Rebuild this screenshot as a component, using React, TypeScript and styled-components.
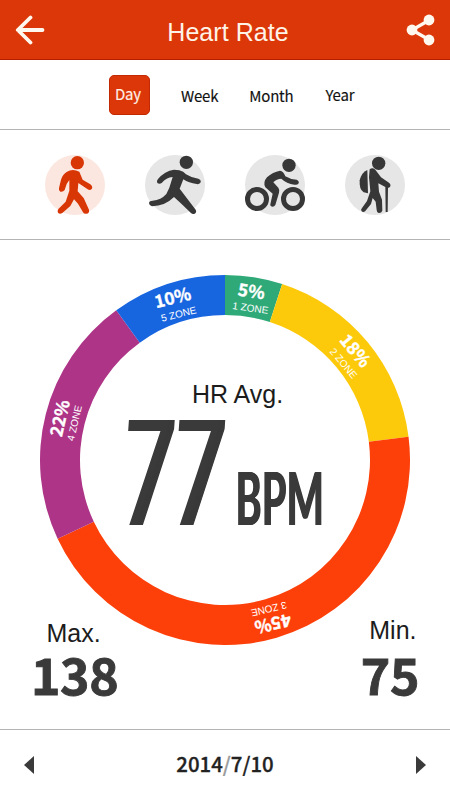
import React from "react";
import styled, { createGlobalStyle } from "styled-components";

const ARIAL = `"Liberation Sans", Arial, sans-serif`;
const SOURCE = `"Noto Sans CJK SC", "Noto Sans", sans-serif`;
const INK = "#3a3a3a";
const RED = "#dc3708";

const GlobalStyle = createGlobalStyle`
  * { box-sizing: border-box; }
  body { margin: 0; background: #fff; }
`;

const Screen = styled.main`
  width: 450px;
  height: 800px;
  display: flex;
  flex-direction: column;
  overflow: hidden;
  background: #fff;
`;

const Header = styled.header`
  height: 60px;
  flex: none;
  display: flex;
  align-items: center;
  justify-content: space-between;
  padding: 0 14px 0 15px;
  background: ${RED};
  border-bottom: 1px solid #b51c00;
`;

const Title = styled.h1`
  margin: 4px 0 0 5px;
  font: 400 25px/30px ${ARIAL};
  letter-spacing: 0.05px;
  color: #fff3e8;
`;

const IconButton = styled.button`
  display: flex;
  padding: 0;
  border: 0;
  background: none;
`;

const Tabs = styled.nav`
  height: 70px;
  flex: none;
  display: flex;
  align-items: flex-start;
  padding: 15px 0 0 109px;
  border-bottom: 1px solid #b4b4b4;
`;

const Tab = styled.button<{ $active?: boolean; $gap?: number; $drop?: number }>`
  height: 40px;
  width: ${(p) => (p.$active ? "41px" : "auto")};
  margin: ${(p) => (p.$active ? 0 : p.$drop ?? 0)}px 0 0 ${(p) => p.$gap ?? 0}px;
  padding: 0 ${(p) => (p.$active ? "3px" : "0")} 2px 0;
  border: ${(p) => (p.$active ? "1px solid #c22a06" : "0")};
  border-radius: 5px;
  background: ${(p) => (p.$active ? RED : "transparent")};
  color: ${(p) => (p.$active ? "#fff0e6" : "#111")};
  font: 400 15px/36px ${SOURCE};
  letter-spacing: -0.2px;
  -webkit-text-stroke: 0.15px currentColor;
  text-align: center;
`;

const Activities = styled.section`
  height: 110px;
  flex: none;
  display: flex;
  justify-content: center;
  padding: 15px 0 0 10px;
  border-bottom: 1px solid #b4b4b4;
`;

const Activity = styled.svg<{ $active?: boolean }>`
  width: 100px;
  height: 80px;
  color: ${(p) => (p.$active ? "#d93606" : "#373737")};
  .disc { fill: ${(p) => (p.$active ? "#fbe7e0" : "#e6e6e6")}; }
`;

const ChartArea = styled.section`
  height: 370px;
  flex: none;
  margin-top: 35px;
  display: grid;
  justify-content: center;
  > * { grid-area: 1 / 1; }
`;

const Donut = styled.svg`
  width: 370px;
  height: 370px;
  fill: #fff;
`;

const Reading = styled.div`
  display: flex;
  flex-direction: column;
  align-items: center;
  padding-top: 104px;
`;

const Label = styled.span<{ $shift?: number }>`
  font: 400 25px/30px ${ARIAL};
  color: #1c1c1c;
  margin-left: ${(p) => p.$shift ?? 0}px;
`;

const ReadingRow = styled.svg`
  width: 210px;
  height: 125px;
  overflow: visible;
  fill: ${INK};
`;

const BigNumber = styled.text`
  font: 400 147px "Open Sans", sans-serif;
  letter-spacing: 5.5px;
  text-shadow: 1px 0 ${INK}, 2px 0 ${INK}, 3px 0 ${INK}, 4px 0 ${INK}, 5px 0 ${INK}, 6px 0 ${INK}, 7px 0 ${INK}, 8px 0 ${INK}, 9px 0 ${INK};
`;

const Unit = styled.text`
  font: 700 73px Lato, sans-serif;
  letter-spacing: 0.5px;
  text-shadow: 1px 0 ${INK}, 2px 0 ${INK};
`;

const Percent = styled.text`
  font: 700 17.2px ${SOURCE};
  text-anchor: middle;
  stroke: #fff;
  stroke-width: 0.4px;
`;

const Zone = styled.text`
  font: 400 10px ${ARIAL};
  text-anchor: middle;
`;

const Extremes = styled.section`
  flex: 1;
  display: flex;
  justify-content: space-between;
  margin-top: -30px;
  padding: 0 31px 0 31px;
`;

const Extreme = styled.div<{ $drop?: number }>`
  display: flex;
  flex-direction: column;
  padding-top: ${(p) => p.$drop ?? 0}px;
`;

const ExtremeValue = styled.strong<{ $up?: number }>`
  font: 700 50px/60px ${SOURCE};
  letter-spacing: -0.4px;
  -webkit-text-stroke: 0.9px ${INK};
  margin-top: ${(p) => -(p.$up ?? 0)}px;
  color: ${INK};
`;

const Footer = styled.footer`
  height: 71px;
  flex: none;
  display: flex;
  align-items: center;
  justify-content: space-between;
  padding: 0 24px;
  border-top: 1px solid #b4b4b4;
`;

const DateText = styled.time`
  font: 500 20.4px/30px ${SOURCE};
  -webkit-text-stroke: 0.3px currentColor;
  margin-top: -4px;
  color: #222;
  i { font-style: normal; color: #999; }
`;

const ZONES = [
  { name: "1 ZONE", value: 5, color: "#30a978", x: 251.5, y: 291, turn: 8, zx: 250.5, zy: 307.5 },
  { name: "2 ZONE", value: 18, color: "#fdca0b", x: 355.5, y: 350.5, turn: 50, zx: 344, zy: 363 },
  { name: "3 ZONE", value: 45, color: "#fd3f09", x: 273, y: 624, turn: 167, zx: 269, zy: 609.5 },
  { name: "4 ZONE", value: 22, color: "#ad3487", x: 59.5, y: 418, turn: -77, zx: 74, zy: 423 },
  { name: "5 ZONE", value: 10, color: "#1865e0", x: 172.5, y: 297.5, turn: -14, zx: 178.5, zy: 313.5 },
];

const CX = 225;
const CY = 460;

const at = (pct: number, r: number) => {
  const a = (pct / 100) * Math.PI * 2;
  return `${CX + r * Math.sin(a)} ${CY - r * Math.cos(a)}`;
};

const arc = (from: number, to: number) =>
  `M${at(from, 185)}A185 185 0 0 1 ${at(to, 185)}L${at(to, 145)}A145 145 0 0 0 ${at(from, 145)}Z`;

function HeartChart() {
  let start = 0;
  return (
    <Donut viewBox="40 275 370 370">
      {ZONES.map((z) => {
        const from = start;
        start += z.value;
        return (
          <g key={z.name}>
            <path d={arc(from, start)} fill={z.color} />
            <Percent transform={`translate(${z.x} ${z.y}) rotate(${z.turn})`} y={6.5}>{z.value}%</Percent>
            <Zone transform={`translate(${z.zx} ${z.zy}) rotate(${z.turn})`} y={4}>{z.name}</Zone>
          </g>
        );
      })}
    </Donut>
  );
}

const line = { fill: "none", stroke: "currentColor", strokeLinecap: "round", strokeLinejoin: "round" } as const;

function Walk() {
  return (
    <Activity $active viewBox="0 0 300 240">
      <circle className="disc" cx="135" cy="120" r="90" />
      <g fill="currentColor">
        <circle cx="142" cy="53" r="20" />
        <path d="M111 80Q128 70 148 80L158 104 181 118Q190 126 185 132 180 137 173 133L145 114 143 139 161 159 177 194Q179 203 171 206 163 208 159 202L144 176 132 163 121 183 97 204Q89 209 84 203 81 198 85 192L107 170 118 137V105L110 117 104 135Q99 142 91 140 85 137 87 129L93 104Q98 87 111 80Z" />
      </g>
    </Activity>
  );
}

function Run() {
  return (
    <Activity viewBox="0 0 300 240">
      <circle className="disc" cx="135" cy="120" r="90" />
      <g fill="currentColor">
        <circle cx="169" cy="52" r="20" />
        <path d="M84 102Q104 78 132 74L148 76Q161 79 168 88 185 99 205 101 214 105 212 112 209 119 200 117 176 114 160 103L149 131 173 163 197 194Q201 201 194 206 188 209 182 203L154 176 132 156Q105 183 66 184 57 181 57 174 58 167 68 167 93 165 109 147L118 128 128 96Q109 98 95 114 88 119 82 114 78 109 84 102Z" />
      </g>
    </Activity>
  );
}

function Cycle() {
  return (
    <Activity viewBox="0 0 300 240">
      <circle className="disc" cx="135" cy="120" r="90" />
      <circle cx="177" cy="61" r="20" fill="currentColor" />
      <g {...line}>
        <circle cx="81" cy="162" r="28.5" strokeWidth="15" />
        <circle cx="189" cy="162" r="28.5" strokeWidth="15" />
      </g>
      <path fill="currentColor" d="M111 97Q128 81 150 77 160 78 166 94 182 104 200 104 208 108 206 115 202 121 193 119 170 116 154 101 140 101 130 112L145 128Q149 133 147 143L136 180Q131 188 123 184 119 181 122 173L128 146 106 127Q98 112 111 97Z" />
    </Activity>
  );
}

function Hike() {
  return (
    <Activity viewBox="0 0 300 240">
      <circle className="disc" cx="135" cy="120" r="90" />
      <g fill="currentColor">
        <circle cx="146" cy="55" r="20" />
        <path d="M112 75Q95 82 89 106 87 134 101 142L114 145Z" />
        <path d="M119 73Q127 66 136 74L153 97 177 113Q184 118 180 126L174 129 173 201H167L166 126 145 115 147 140 156 164 157 197Q154 205 146 204 140 202 140 195L137 170 128 159 123 177 106 198Q100 203 95 199 91 195 96 189L111 168 121 139 117 97Z" />
      </g>
    </Activity>
  );
}

export default function App() {
  return (
    <>
      <GlobalStyle />
      <Screen>
        <Header>
          <IconButton aria-label="Back">
            <svg width="30" height="30" viewBox="15 15 30 30" {...line} stroke="#fff8ee" strokeWidth="3.8">
              <path d="M30.5 17.5 17.8 30 30.5 42.5M18 30H42.5" />
            </svg>
          </IconButton>
          <Title>Heart Rate</Title>
          <IconButton aria-label="Share">
            <svg width="30" height="32" viewBox="405 14 30 32" fill="#fff8ee">
              <path d="M428.5 20 411 30 428.5 40" fill="none" stroke="#fff8ee" strokeWidth="3.3" />
              <circle cx="428" cy="20" r="5.4" />
              <circle cx="411" cy="30" r="5.4" />
              <circle cx="428" cy="40" r="5.4" />
            </svg>
          </IconButton>
        </Header>
        <Tabs>
          <Tab $active>Day</Tab>
          <Tab $gap={31} $drop={2}>Week</Tab>
          <Tab $gap={31} $drop={2}>Month</Tab>
          <Tab $gap={32} $drop={1}>Year</Tab>
        </Tabs>
        <Activities>
          <Walk />
          <Run />
          <Cycle />
          <Hike />
        </Activities>
        <ChartArea>
          <HeartChart />
          <Reading>
            <Label $shift={25}>HR Avg.</Label>
            <ReadingRow viewBox="120 409 210 125">
              <BigNumber transform="translate(117.5 525) skewX(-4.2) scale(.565 1)">77</BigNumber>
              <Unit transform="translate(235 525) scale(.54 1)">BPM</Unit>
            </ReadingRow>
          </Reading>
        </ChartArea>
        <Extremes>
          <Extreme $drop={3}>
            <Label $shift={15.5}>Max.</Label>
            <ExtremeValue $up={5}>138</ExtremeValue>
          </Extreme>
          <Extreme>
            <Label $shift={8.5}>Min.</Label>
            <ExtremeValue $up={2}>75</ExtremeValue>
          </Extreme>
        </Extremes>
        <Footer>
          <svg width="10" height="18" viewBox="0 0 10 18" fill={INK}><path d="M10 0V18L0 9Z" /></svg>
          <DateText>2014<i>/</i>7/10</DateText>
          <svg width="10" height="18" viewBox="0 0 10 18" fill={INK}><path d="M0 0V18L10 9Z" /></svg>
        </Footer>
      </Screen>
    </>
  );
}
